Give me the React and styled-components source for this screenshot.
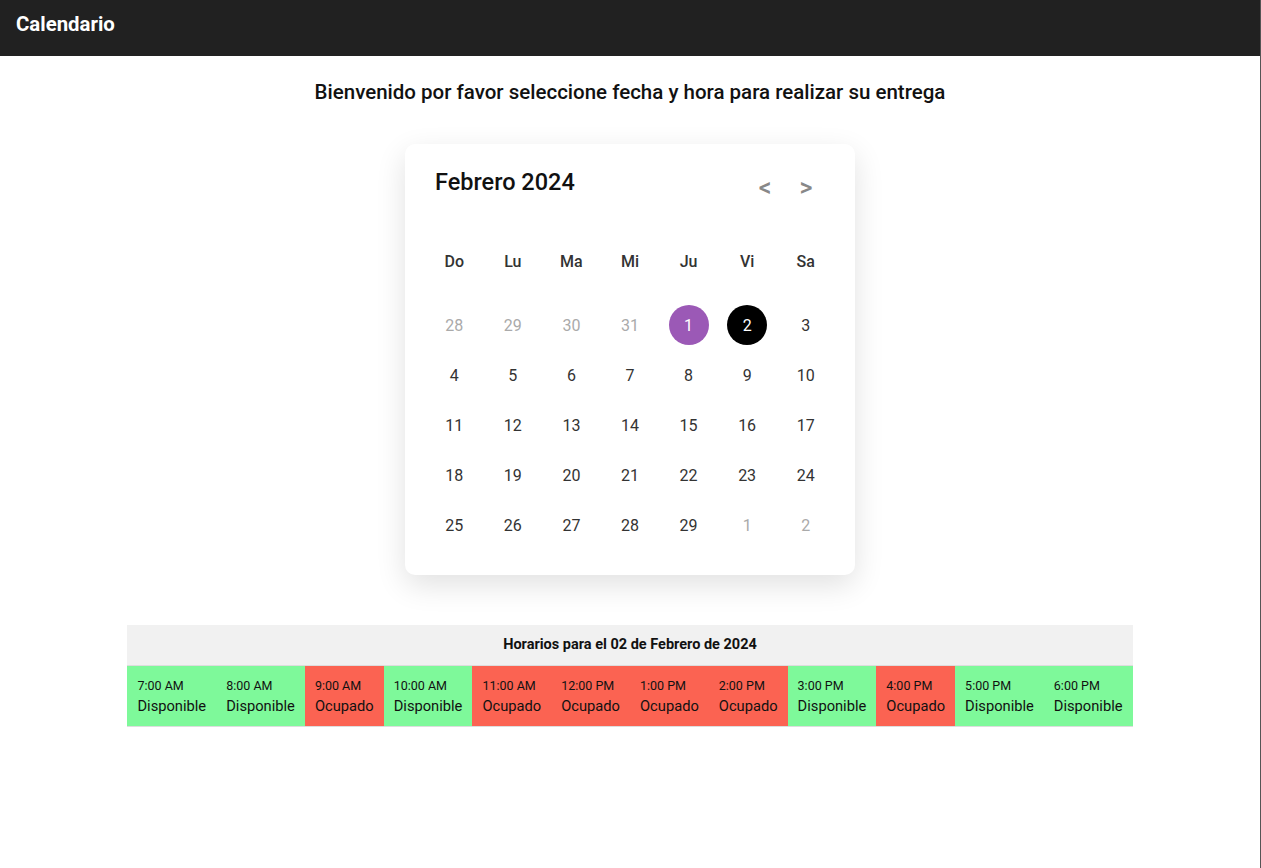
import styled, { createGlobalStyle } from 'styled-components';

const GlobalStyle = createGlobalStyle`
  body {
    margin: 0;
    font-family: Roboto, "Liberation Sans", sans-serif;
    background: #fff;
  }
`;

const weekdays = ['Do', 'Lu', 'Ma', 'Mi', 'Ju', 'Vi', 'Sa'];

const days = [
  { n: 28, out: true }, { n: 29, out: true }, { n: 30, out: true }, { n: 31, out: true },
  { n: 1, today: true }, { n: 2, selected: true }, { n: 3 },
  ...Array.from({ length: 26 }, (_, i) => ({ n: i + 4 })),
  { n: 1, out: true }, { n: 2, out: true },
];

const slots = [
  ['7:00 AM', true], ['8:00 AM', true], ['9:00 AM', false], ['10:00 AM', true],
  ['11:00 AM', false], ['12:00 PM', false], ['1:00 PM', false], ['2:00 PM', false],
  ['3:00 PM', true], ['4:00 PM', false], ['5:00 PM', true], ['6:00 PM', true],
];

export default function App() {
  return (
    <Page>
      <GlobalStyle />
      <TopBar>Calendario</TopBar>
      <Welcome>Bienvenido por favor seleccione fecha y hora para realizar su entrega</Welcome>

      <Card>
        <CardHeader>
          <MonthTitle>Febrero 2024</MonthTitle>
          <Nav>
            <NavButton>&lt;</NavButton>
            <NavButton>&gt;</NavButton>
          </Nav>
        </CardHeader>
        <WeekRow>
          {weekdays.map((d) => (
            <WeekDay key={d}>{d}</WeekDay>
          ))}
        </WeekRow>
        <DaysGrid>
          {days.map((d, i) => (
            <DayCell key={i}>
              <Day $out={d.out} $today={d.today} $selected={d.selected}>
                {d.n}
              </Day>
            </DayCell>
          ))}
        </DaysGrid>
      </Card>

      <Schedule>
        <thead>
          <tr>
            <HeadCell colSpan={12}>Horarios para el 02 de Febrero de 2024</HeadCell>
          </tr>
        </thead>
        <tbody>
          <tr>
            {slots.map(([time, free]) => (
              <SlotCell key={time} $free={free}>
                <SlotTime>{time}</SlotTime>
                <SlotStatus>{free ? 'Disponible' : 'Ocupado'}</SlotStatus>
              </SlotCell>
            ))}
          </tr>
        </tbody>
      </Schedule>
    </Page>
  );
}

const Page = styled.div`
  min-height: 100vh;
  border-right: 1px solid #555;
  box-sizing: border-box;
  display: flex;
  flex-direction: column;
  align-items: center;
`;

const TopBar = styled.header`
  align-self: stretch;
  height: 56px;
  background: #212121;
  color: #fff;
  font-size: 20.4px;
  font-weight: 700;
  line-height: 48px;
  padding-left: 16px;
  box-sizing: border-box;
`;

const Welcome = styled.h2`
  margin: 24px 0 40px;
  font-size: 20.5px;
  font-weight: 500;
  line-height: 24px;
  color: #111;
`;

const Card = styled.div`
  width: 450px;
  box-sizing: border-box;
  padding: 20px 20px 25px;
  background: #fff;
  border-radius: 10px;
  box-shadow: 0 10px 30px rgba(0, 0, 0, 0.12);
`;

const CardHeader = styled.div`
  height: 72px;
  display: flex;
  justify-content: space-between;
  align-items: flex-start;
  padding: 0 20px 0 10px;
`;

const MonthTitle = styled.div`
  margin-top: 4px;
  font-size: 23.5px;
  font-weight: 500;
  line-height: 28px;
  color: #111;
`;

const Nav = styled.div`
  display: flex;
  gap: 23px;
  margin-top: 9px;
`;

const NavButton = styled.span`
  width: 18px;
  text-align: center;
  font-size: 25px;
  font-weight: 500;
  line-height: 30px;
  color: #888;
  cursor: pointer;
`;

const WeekRow = styled.div`
  display: grid;
  grid-template-columns: repeat(7, 1fr);
  height: 50px;
  margin-bottom: 14px;
`;

const WeekDay = styled.div`
  display: flex;
  align-items: center;
  justify-content: center;
  font-size: 16px;
  font-weight: 500;
  color: #333;
`;

const DaysGrid = styled.div`
  display: grid;
  grid-template-columns: repeat(7, 1fr);
  grid-auto-rows: 50px;
`;

const DayCell = styled.div`
  display: flex;
  align-items: center;
  justify-content: center;
`;

const Day = styled.div`
  width: 40px;
  height: 40px;
  border-radius: 50%;
  display: flex;
  align-items: center;
  justify-content: center;
  font-size: 16px;
  color: ${(p) => (p.$today || p.$selected ? '#fff' : p.$out ? '#aaa' : '#333')};
  background: ${(p) => (p.$today ? '#9b59b6' : p.$selected ? '#000' : 'transparent')};
`;

const Schedule = styled.table`
  margin-top: 50px;
  border-collapse: collapse;
`;

const HeadCell = styled.th`
  background: #f1f1f1;
  padding: 10px;
  font-size: 14.5px;
  font-weight: 700;
  line-height: 20px;
  color: #111;
  border-bottom: 1px solid #ddd;
`;

const SlotCell = styled.td`
  padding: 10px;
  text-align: left;
  white-space: nowrap;
  background: ${(p) => (p.$free ? '#7ef99a' : '#fb6352')};
  border-bottom: 1px solid #ddd;
  color: #111;
`;

const SlotTime = styled.div`
  font-size: 12.5px;
  line-height: 20px;
`;

const SlotStatus = styled.div`
  font-size: 14.7px;
  line-height: 20px;
`;
